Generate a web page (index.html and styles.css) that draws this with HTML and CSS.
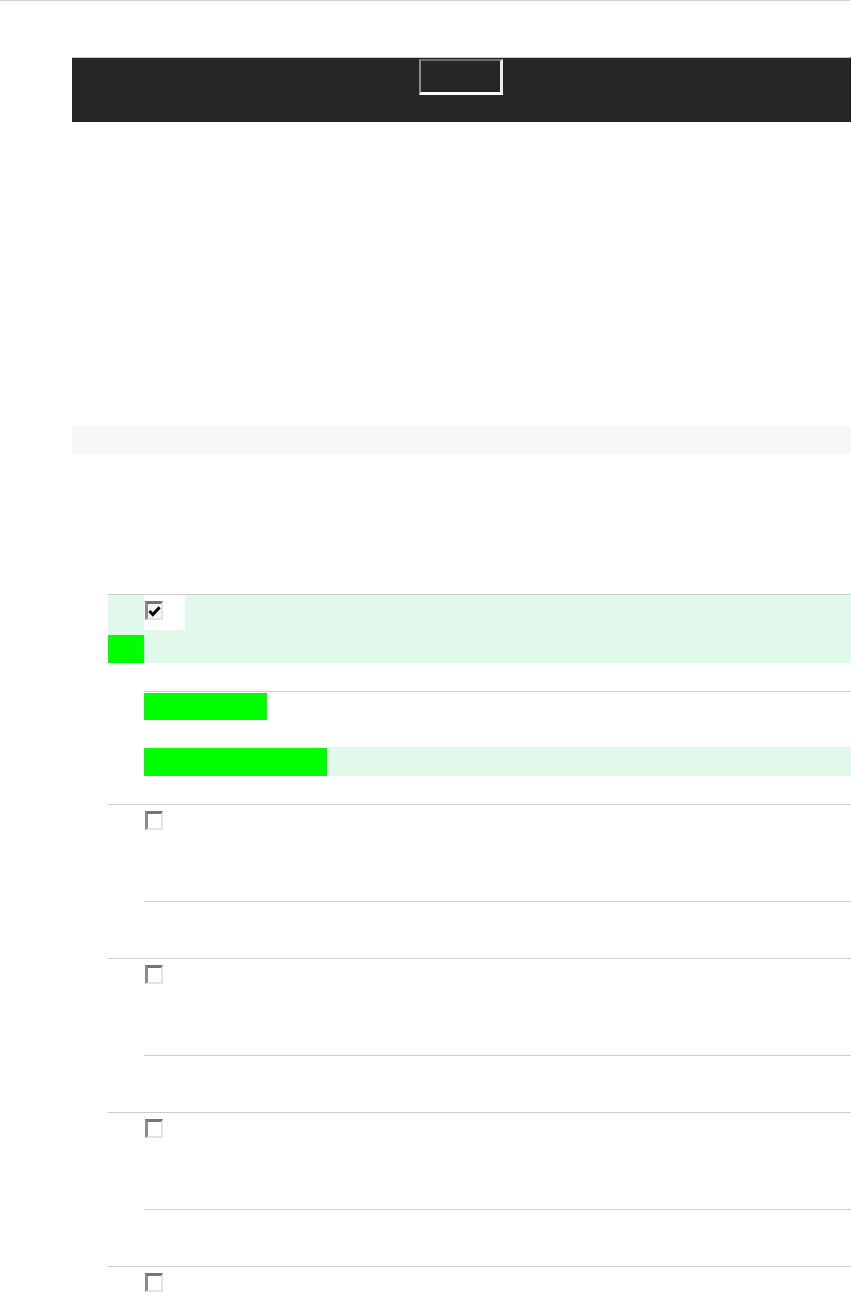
FILE: index.html
```html
<!DOCTYPE html>
<html lang="en">
<head>
<meta charset="utf-8">
<title>List</title>
<link rel="stylesheet" href="styles.css">
</head>
<body>
<div class="topline"></div>
<div class="toolbar">
  <button class="tb-btn" type="button" aria-label="Action"></button>
</div>
<div class="strip"></div>
<div class="list">
  <div class="item item-checked">
    <div class="checked-body">
      <div class="checked-row">
        <span class="cb-spacer"></span>
        <span class="cb-wrap"><span class="cb cb-on"><svg viewBox="0 0 14 14" width="14" height="14"><path d="M1.5 7 L5.2 10.8 L12.5 3" fill="none" stroke="#000" stroke-width="3.2" stroke-linejoin="miter"/></svg></span></span>
      </div>
      <div class="green-mark"></div>
    </div>
    <div class="checked-sub">
      <div class="bar bar-a"></div>
      <div class="bar-row">
        <div class="bar bar-b"></div>
      </div>
    </div>
  </div>
  <div class="item">
    <div class="item-head"><span class="cb"></span></div>
    <div class="item-sub"></div>
  </div>
  <div class="item">
    <div class="item-head"><span class="cb"></span></div>
    <div class="item-sub"></div>
  </div>
  <div class="item">
    <div class="item-head"><span class="cb"></span></div>
    <div class="item-sub"></div>
  </div>
  <div class="item">
    <div class="item-head"><span class="cb"></span></div>
    <div class="item-sub"></div>
  </div>
</div>
</body>
</html>
```

FILE: styles.css
```css
html, body {
  margin: 0;
  padding: 0;
  background: #ffffff;
  font-family: "Liberation Sans", Arial, sans-serif;
}

.topline {
  width: 850px;
  height: 1px;
  background: #d0d0d0;
}

.toolbar {
  margin-top: 56px;
  margin-left: 72px;
  height: 65px;
  box-sizing: border-box;
  border-top: 1px solid #c8c8c8;
  border-right: 1px solid #1a1a1a;
  background: #262626;
  display: flex;
  justify-content: center;
  align-items: flex-start;
  padding-top: 1px;
}

.tb-btn {
  width: 84px;
  height: 36px;
  box-sizing: border-box;
  margin: 0;
  padding: 0;
  background: #262626;
  border-style: solid;
  border-width: 2px 3px 3px 2px;
  border-top-color: #6e6e6e;
  border-left-color: #8a8a8a;
  border-right-color: #ececec;
  border-bottom-color: #ffffff;
}

.strip {
  margin-top: 304px;
  margin-left: 72px;
  height: 28px;
  background: #f7f7f7;
}

.list {
  margin-top: 140px;
  margin-left: 108px;
}

.item {
  border-top: 1px solid #cccccc;
}

.checked-body {
  background: #e0f9ea;
  height: 68px;
}

.checked-row {
  display: flex;
  height: 35px;
}

.cb-spacer {
  width: 36px;
}

.cb-wrap {
  width: 41px;
  height: 35px;
  background: #ffffff;
  box-sizing: border-box;
  padding: 6px 0 0 1px;
}

.green-mark {
  margin-top: 5px;
  width: 36px;
  height: 28px;
  background: #00ff00;
}

.cb {
  display: flex;
  align-items: center;
  justify-content: center;
  width: 18px;
  height: 19px;
  box-sizing: border-box;
  background: #ffffff;
  border-style: solid;
  border-width: 3px 2px 2px 3px;
  border-top-color: #767676;
  border-left-color: #8c8c8c;
  border-right-color: #e4e4e4;
  border-bottom-color: #e4e4e4;
}

.cb-on {
  background: #f4f4f4;
}

.checked-sub {
  margin-top: 28px;
  margin-left: 36px;
  border-top: 1px solid #cccccc;
  padding-top: 1px;
  padding-bottom: 28px;
}

.bar {
  background: #00ff00;
}

.bar-a {
  width: 123px;
  height: 27px;
}

.bar-row {
  margin-top: 27px;
  background: #e0f9ea;
  padding-top: 1px;
  height: 29px;
  box-sizing: border-box;
}

.bar-b {
  width: 183px;
  height: 28px;
}

.item-head {
  height: 96px;
  box-sizing: border-box;
  padding: 6px 0 0 37px;
}

.item-sub {
  margin-left: 36px;
  height: 57px;
  box-sizing: border-box;
  border-top: 1px solid #cccccc;
}
```
